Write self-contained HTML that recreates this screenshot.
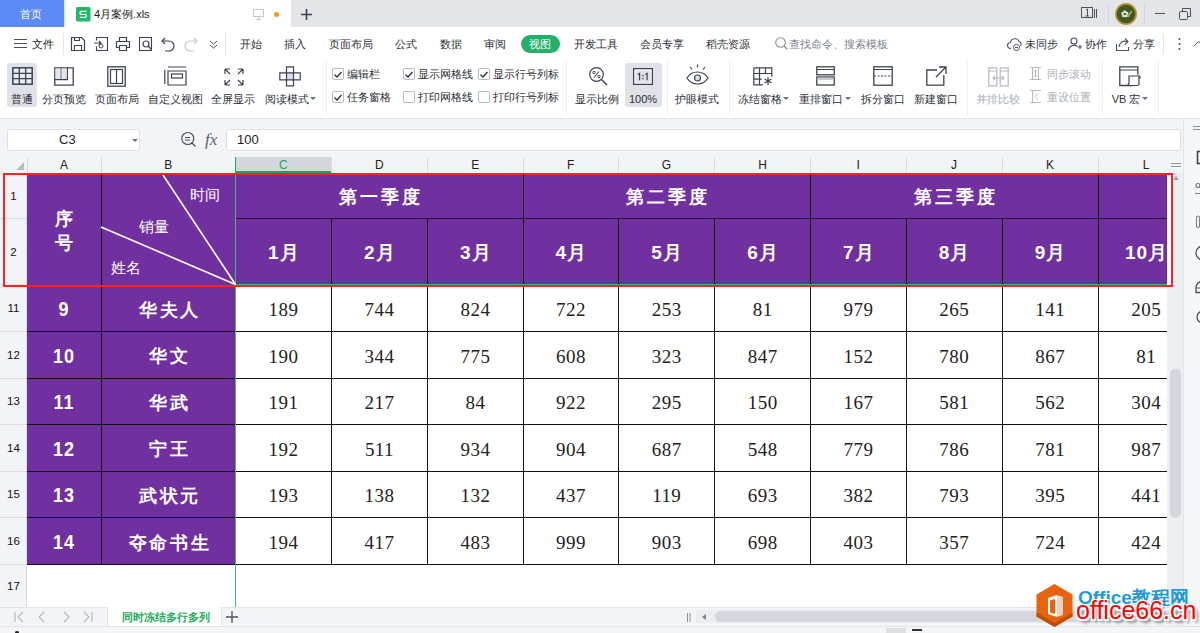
<!DOCTYPE html><html><head><meta charset="utf-8"><style>
*{margin:0;padding:0;box-sizing:border-box}
html,body{width:1200px;height:633px;overflow:hidden;background:#fff;font-family:"Liberation Sans",sans-serif;color:#333}
.ab{position:absolute}
.t{position:absolute;white-space:nowrap;font-size:11px;line-height:14px;color:#3a3d44}
.sep{position:absolute;width:1px;background:#e4e6ea}
.cell{position:absolute;display:flex;align-items:center;justify-content:center;white-space:nowrap}
.ph{color:#fff;font-weight:bold}
.num{font-family:"Liberation Serif",serif;font-size:19px;color:#222;padding-top:4px;letter-spacing:0.4px;padding-left:0.4px}
svg{position:absolute;overflow:visible}
</style></head><body>

<div class="ab" style="left:0;top:0;width:1200px;height:27px;background:#e3e5e9"></div>
<div class="ab" style="left:0;top:0;width:64px;height:27px;background:#5e8af5"></div>
<div class="t" style="left:20px;top:7px;font-size:11px;line-height:15px;color:#fff">首页</div>
<div class="ab" style="left:65px;top:0;width:226px;height:27px;background:#fff;border-left:1px solid #e8e9ec"></div>
<svg style="left:76px;top:7px" width="14.5" height="14.5"><rect x="0" y="0" width="14.5" height="14.5" rx="1.5" fill="#1dba6c"/><path d="M10.6 4.4H5.4A1.5 1.5 0 0 0 5.4 7.4H9A1.5 1.5 0 0 1 9 10.4H3.8" fill="none" stroke="#fff" stroke-width="1.1"/></svg>
<div class="t" style="left:94px;top:7px;font-size:11px;line-height:15px;color:#222">4月案例.xls</div>
<svg style="left:253px;top:9px" width="11" height="11"><rect x="0.5" y="0.5" width="10" height="7" fill="none" stroke="#c3c7cf" stroke-width="1"/><path d="M5.5 8v2M3 10.5h5" stroke="#c3c7cf"/></svg>
<div class="ab" style="left:274px;top:12px;width:5px;height:5px;border-radius:50%;background:#ec9a16"></div>
<svg style="left:301px;top:9px" width="11" height="11"><path d="M5.5 0v11M0 5.5h11" stroke="#3b4252" stroke-width="1.6"/></svg>
<svg style="left:1081px;top:6px" width="18" height="14"><rect x="0.5" y="1.5" width="11" height="10" fill="none" stroke="#4a5060"/><path d="M5 4l1.5-1v7M4.5 10h3.5" fill="none" stroke="#4a5060"/><path d="M13.5 3v9M15.5 3v9" stroke="#4a5060"/></svg>
<div class="sep" style="left:1108px;top:4px;height:19px;background:#d2d5db"></div>
<div class="ab" style="left:1115px;top:3px;width:22px;height:22px;border-radius:50%;background:radial-gradient(circle,#3e5a1e 55%,#b8862c 62%,#d9b25a 80%,#8a6424 100%)"></div>
<div class="t" style="left:1121px;top:7px;font-size:9px;color:#e8e8e0;font-weight:bold">✿⁄</div>
<div class="sep" style="left:1144px;top:4px;height:19px;background:#d2d5db"></div>
<div class="ab" style="left:1155px;top:13px;width:10px;height:1px;background:#4a5060"></div>
<svg style="left:1179px;top:8px" width="12" height="12"><rect x="0.5" y="3.5" width="8" height="8" fill="none" stroke="#4a5060" rx="1"/><path d="M3.5 3.5V0.5h8v8h-3" fill="none" stroke="#4a5060"/></svg>
<svg style="left:14px;top:39px" width="13" height="10"><path d="M0 0.5h13M0 4.5h13M0 8.5h13" stroke="#4a5060" stroke-width="1.2"/></svg>
<div class="t" style="left:32px;top:37px;color:#222">文件</div>
<div class="sep" style="left:63px;top:33px;height:22px"></div>
<svg style="left:71px;top:37px" width="14" height="14"><path d="M0.5 0.5h10l3 3v10h-13z" fill="none" stroke="#3c4250" stroke-width="1.2"/><path d="M3.5 13.5v-5h7v5M3.5 0.5v3h5v-3" fill="none" stroke="#3c4250" stroke-width="1.1"/></svg>
<svg style="left:94px;top:37px" width="14" height="14"><path d="M2.5 3.5v-3h11v13h-11v-4" fill="none" stroke="#3c4250" stroke-width="1.1"/><path d="M0 6h7M5 4l2 2-2 2" fill="none" stroke="#3c4250" stroke-width="1.1"/><circle cx="7" cy="9" r="2" fill="none" stroke="#3c4250"/></svg>
<svg style="left:116px;top:37px" width="14" height="14"><path d="M3.5 4.5v-4h7v4M0.5 4.5h13v6h-3M3.5 10.5h-3v-6M3.5 8.5h7v5h-7z" fill="none" stroke="#3c4250" stroke-width="1.2"/></svg>
<svg style="left:139px;top:37px" width="14" height="14"><rect x="0.5" y="0.5" width="12" height="13" fill="none" stroke="#3c4250" stroke-width="1.1"/><circle cx="7" cy="7" r="3" fill="none" stroke="#3c4250" stroke-width="1.2"/><path d="M9 9l3.5 3.5" stroke="#3c4250" stroke-width="1.3"/></svg>
<svg style="left:161px;top:37px" width="14" height="14"><path d="M4 1L1 4l3 3" fill="none" stroke="#3c4250" stroke-width="1.2"/><path d="M1 4h7a5 5 0 0 1 0 10H4" fill="none" stroke="#3c4250" stroke-width="1.2"/></svg>
<svg style="left:184px;top:37px" width="14" height="14"><path d="M10 1l3 3-3 3" fill="none" stroke="#c6cad1" stroke-width="1.2"/><path d="M13 4H6a5 5 0 0 0 0 10h4" fill="none" stroke="#c6cad1" stroke-width="1.2"/></svg>
<svg style="left:209px;top:40px" width="9" height="9"><path d="M1 1l3.5 3 3.5-3M1 5l3.5 3 3.5-3" fill="none" stroke="#4a5060" stroke-width="1"/></svg>
<div class="sep" style="left:225px;top:33px;height:22px"></div>
<div class="t" style="left:240px;top:37px;color:#2b2f36">开始</div>
<div class="t" style="left:284px;top:37px;color:#2b2f36">插入</div>
<div class="t" style="left:329px;top:37px;color:#2b2f36">页面布局</div>
<div class="t" style="left:395px;top:37px;color:#2b2f36">公式</div>
<div class="t" style="left:440px;top:37px;color:#2b2f36">数据</div>
<div class="t" style="left:484px;top:37px;color:#2b2f36">审阅</div>
<div class="t" style="left:574px;top:37px;color:#2b2f36">开发工具</div>
<div class="t" style="left:640px;top:37px;color:#2b2f36">会员专享</div>
<div class="t" style="left:706px;top:37px;color:#2b2f36">稻壳资源</div>
<div class="ab" style="left:521px;top:35px;width:39px;height:18px;border-radius:9px;background:#23b06b"></div>
<div class="t" style="left:529px;top:37px;color:#fff">视图</div>
<svg style="left:775px;top:37px" width="13" height="13"><circle cx="5.5" cy="5.5" r="4.8" fill="none" stroke="#8a909c" stroke-width="1.1"/><path d="M9 9l3.5 3.5" stroke="#8a909c" stroke-width="1.2"/></svg>
<div class="t" style="left:789px;top:37px;color:#7c828e">查找命令、搜索模板</div>
<svg style="left:1007px;top:37px" width="15" height="14"><path d="M4 11.5H3.5a3 3 0 0 1 0-6 4.5 4.5 0 0 1 8.6-1 3 3 0 0 1 1.5 4.5" fill="none" stroke="#4a5060" stroke-width="1.1"/><circle cx="9.5" cy="10.5" r="3" fill="#fff" stroke="#4a5060"/><path d="M8 10.5h3" stroke="#4a5060"/></svg>
<div class="t" style="left:1025px;top:37px;color:#2b2f36">未同步</div>
<svg style="left:1068px;top:37px" width="14" height="14"><circle cx="6" cy="4" r="3" fill="none" stroke="#4a5060" stroke-width="1.1"/><path d="M0.5 13.5a5.5 5.5 0 0 1 9-4M10 10h4M12 8v4" fill="none" stroke="#4a5060" stroke-width="1.1"/></svg>
<div class="t" style="left:1085px;top:37px;color:#2b2f36">协作</div>
<svg style="left:1116px;top:37px" width="14" height="14"><path d="M0.5 7v6.5h12V10" fill="none" stroke="#4a5060" stroke-width="1.1"/><path d="M3 10a6 6 0 0 1 8-5.5M9 1.5l3 3-3 3" fill="none" stroke="#4a5060" stroke-width="1.1"/></svg>
<div class="t" style="left:1133px;top:37px;color:#2b2f36">分享</div>
<div class="sep" style="left:1163px;top:34px;height:20px"></div>
<svg style="left:1178px;top:37px" width="3" height="14"><circle cx="1.5" cy="2" r="1" fill="#4a5060"/><circle cx="1.5" cy="7" r="1" fill="#4a5060"/><circle cx="1.5" cy="12" r="1" fill="#4a5060"/></svg>
<svg style="left:1194px;top:40px" width="8" height="6"><path d="M0.5 5.5l4-4 4 4" fill="none" stroke="#4a5060"/></svg>
<div class="ab" style="left:7px;top:63px;width:30px;height:44px;background:#dfe2e7;border-radius:3px"></div>
<div class="ab" style="left:625px;top:63px;width:37px;height:44px;background:#dfe2e7;border-radius:3px"></div>
<div class="t" style="left:-38px;width:120px;text-align:center;top:92px;color:#2b2f36">普通</div>
<div class="t" style="left:4px;width:120px;text-align:center;top:92px;color:#2b2f36">分页预览</div>
<div class="t" style="left:57px;width:120px;text-align:center;top:92px;color:#2b2f36">页面布局</div>
<div class="t" style="left:115px;width:120px;text-align:center;top:92px;color:#2b2f36">自定义视图</div>
<div class="t" style="left:173px;width:120px;text-align:center;top:92px;color:#2b2f36">全屏显示</div>
<div class="t" style="left:537px;width:120px;text-align:center;top:92px;color:#2b2f36">显示比例</div>
<div class="t" style="left:583px;width:120px;text-align:center;top:92px;color:#2b2f36">100%</div>
<div class="t" style="left:637px;width:120px;text-align:center;top:92px;color:#2b2f36">护眼模式</div>
<div class="t" style="left:700px;width:120px;text-align:center;top:92px;color:#2b2f36">冻结窗格</div>
<div class="t" style="left:761px;width:120px;text-align:center;top:92px;color:#2b2f36">重排窗口</div>
<div class="t" style="left:823px;width:120px;text-align:center;top:92px;color:#2b2f36">拆分窗口</div>
<div class="t" style="left:876px;width:120px;text-align:center;top:92px;color:#2b2f36">新建窗口</div>
<div class="t" style="left:938px;width:120px;text-align:center;top:92px;color:#a9adb5">并排比较</div>
<div class="t" style="left:1066px;width:120px;text-align:center;top:92px;color:#2b2f36">VB 宏</div>
<div class="t" style="left:265px;top:92px;color:#2b2f36">阅读模式</div>
<svg style="left:310px;top:97px" width="6" height="4"><path d="M0 0h6L3 3z" fill="#6a707c"/></svg>
<svg style="left:783px;top:97px" width="6" height="4"><path d="M0 0h6L3 3z" fill="#6a707c"/></svg>
<svg style="left:845px;top:97px" width="6" height="4"><path d="M0 0h6L3 3z" fill="#6a707c"/></svg>
<svg style="left:1142px;top:97px" width="6" height="4"><path d="M0 0h6L3 3z" fill="#6a707c"/></svg>
<div class="sep" style="left:326px;top:62px;height:54px;background:#eceef1"></div>
<div class="sep" style="left:566px;top:62px;height:54px;background:#eceef1"></div>
<div class="sep" style="left:667px;top:62px;height:54px;background:#eceef1"></div>
<div class="sep" style="left:729px;top:62px;height:54px;background:#eceef1"></div>
<div class="sep" style="left:967px;top:62px;height:54px;background:#eceef1"></div>
<div class="sep" style="left:1102px;top:62px;height:54px;background:#eceef1"></div>
<div class="sep" style="left:1158px;top:62px;height:54px;background:#eceef1"></div>
<div class="ab" style="left:332px;top:68px;width:12px;height:12px;border:1px solid #b5b9c1;border-radius:2px;background:#fff"></div>
<svg style="left:334px;top:71px" width="8" height="7"><path d="M0.5 3.5l2.5 2.5 4.5-5" fill="none" stroke="#2b2f36" stroke-width="1.3"/></svg>
<div class="t" style="left:347px;top:67px;color:#2b2f36">编辑栏</div>
<div class="ab" style="left:332px;top:91px;width:12px;height:12px;border:1px solid #b5b9c1;border-radius:2px;background:#fff"></div>
<svg style="left:334px;top:94px" width="8" height="7"><path d="M0.5 3.5l2.5 2.5 4.5-5" fill="none" stroke="#2b2f36" stroke-width="1.3"/></svg>
<div class="t" style="left:347px;top:90px;color:#2b2f36">任务窗格</div>
<div class="ab" style="left:403px;top:68px;width:12px;height:12px;border:1px solid #b5b9c1;border-radius:2px;background:#fff"></div>
<svg style="left:405px;top:71px" width="8" height="7"><path d="M0.5 3.5l2.5 2.5 4.5-5" fill="none" stroke="#2b2f36" stroke-width="1.3"/></svg>
<div class="t" style="left:418px;top:67px;color:#2b2f36">显示网格线</div>
<div class="ab" style="left:403px;top:91px;width:12px;height:12px;border:1px solid #b5b9c1;border-radius:2px;background:#fff"></div>
<div class="t" style="left:418px;top:90px;color:#2b2f36">打印网格线</div>
<div class="ab" style="left:478px;top:68px;width:12px;height:12px;border:1px solid #b5b9c1;border-radius:2px;background:#fff"></div>
<svg style="left:480px;top:71px" width="8" height="7"><path d="M0.5 3.5l2.5 2.5 4.5-5" fill="none" stroke="#2b2f36" stroke-width="1.3"/></svg>
<div class="t" style="left:493px;top:67px;color:#2b2f36">显示行号列标</div>
<div class="ab" style="left:478px;top:91px;width:12px;height:12px;border:1px solid #b5b9c1;border-radius:2px;background:#fff"></div>
<div class="t" style="left:493px;top:90px;color:#2b2f36">打印行号列标</div>
<svg style="left:1030px;top:67px" width="12" height="13"><path d="M0 0.5h11M0 12.5h11M2.5 1v11M8.5 1v11M5.5 3v7M4 4.5l1.5-1.5 1.5 1.5M4 8.5l1.5 1.5 1.5-1.5" fill="none" stroke="#b5b9c0"/></svg>
<div class="t" style="left:1047px;top:67px;color:#a9adb5">同步滚动</div>
<svg style="left:1030px;top:90px" width="12" height="13"><path d="M0 0.5h11M0 12.5h11M2.5 1v11M8 3.5l-3 3 3 3" fill="none" stroke="#b5b9c0"/></svg>
<div class="t" style="left:1047px;top:90px;color:#a9adb5">重设位置</div>
<svg style="left:12px;top:67px" width="21" height="18"><rect x="0.8" y="0.8" width="19.4" height="16.4" fill="#e9ebee" stroke="#3c4250" stroke-width="1.5"/><path d="M0.8 6.3h19.4M0.8 11.7h19.4M7.3 0.8v16.4M13.7 0.8v16.4" stroke="#3c4250" stroke-width="1.3"/></svg>
<svg style="left:54px;top:67px" width="20" height="19"><path d="M0.8 0.8h18.4v17.4H0.8z" fill="none" stroke="#3c4250" stroke-width="1.3"/><path d="M0.8 12.5h12.5V0.8M7 0.8v11.7" fill="none" stroke="#3c4250" stroke-width="1.3"/><rect x="1.5" y="1.5" width="5" height="10.5" fill="#e3e5e8"/><rect x="7.6" y="1.5" width="5" height="10.5" fill="#e3e5e8"/></svg>
<svg style="left:107px;top:66px" width="19" height="21"><rect x="0.8" y="0.8" width="17.4" height="19.4" fill="none" stroke="#3c4250" stroke-width="1.3"/><rect x="3.5" y="3.5" width="12" height="14" fill="none" stroke="#3c4250" stroke-width="1.2"/><path d="M9.5 3.5v14" stroke="#3c4250" stroke-width="1.2"/></svg>
<svg style="left:164px;top:66px" width="23" height="20"><path d="M0.8 4v14M4 1h18M4 5h18v14H4z" fill="none" stroke="#3c4250" stroke-width="1.2"/><rect x="7.5" y="8" width="11" height="4" fill="none" stroke="#3c4250" stroke-width="1.2"/></svg>
<svg style="left:224px;top:68px" width="20" height="18"><path d="M1 1l5 5M1 1v5M1 1h5M19 1l-5 5M19 1v5M19 1h-5M1 17l5-5M1 17v-5M1 17h5M19 17l-5-5M19 17v-5M19 17h-5" fill="none" stroke="#3c4250" stroke-width="1.2"/></svg>
<svg style="left:279px;top:66px" width="22" height="21"><path d="M7.5 0.8h7v6h6.7v7h-6.7v6h-7v-6H0.8v-7h6.7z" fill="none" stroke="#3c4250" stroke-width="1.2"/><path d="M7.5 6.8h7v7h-7z" fill="#dcdfe3" stroke="#3c4250" stroke-width="1.2"/></svg>
<svg style="left:589px;top:67px" width="19" height="19"><circle cx="7.5" cy="7.5" r="6.8" fill="none" stroke="#3c4250" stroke-width="1.2"/><path d="M12.5 12.5l5.5 5.5" stroke="#3c4250" stroke-width="1.4"/><path d="M10 4.5l-5 6" stroke="#3c4250" stroke-width="1.1"/><circle cx="5" cy="5.5" r="1.2" fill="none" stroke="#3c4250"/><circle cx="10" cy="9.5" r="1.2" fill="none" stroke="#3c4250"/></svg>
<svg style="left:633px;top:67.5px" width="21" height="18"><rect x="0.65" y="0.65" width="18.7" height="15.7" fill="none" stroke="#3c4250" stroke-width="1.3"/><rect x="2" y="2" width="16" height="13" fill="none" stroke="#f4f5f7" stroke-width="1"/><path d="M4.8 6.5l1.8-1.2v7M12.3 6.5l1.8-1.2v7" fill="none" stroke="#3c4250" stroke-width="1.2"/><path d="M10 7.5v.3M10 10.5v.3" stroke="#3c4250" stroke-width="1.4" stroke-linecap="round"/></svg>
<svg style="left:686px;top:64px" width="23" height="22"><path d="M1 14c5-8 16-8 21 0c-5 8-16 8-21 0z" fill="none" stroke="#3c4250" stroke-width="1.2"/><circle cx="11.5" cy="14" r="3" fill="#e0e2e6" stroke="#3c4250" stroke-width="1.2"/><path d="M11.5 0.5v3M4 3l2 2.5M19 3l-2 2.5" stroke="#3c4250" stroke-width="1.2"/></svg>
<svg style="left:753px;top:67px" width="21" height="19"><path d="M0.8 0.8h18v9M0.8 0.8v17h9M0.8 6.5h18M0.8 12.2h8M6.5 0.8v17M12.5 0.8v6" fill="none" stroke="#3c4250" stroke-width="1.2"/><path d="M15 10v8M11.5 12l7 4M18.5 12l-7 4" stroke="#3c4250" stroke-width="1.2"/></svg>
<svg style="left:816px;top:66px" width="19" height="20"><rect x="0.8" y="0.8" width="17.4" height="8" fill="none" stroke="#3c4250" stroke-width="1.3"/><rect x="0.8" y="11" width="17.4" height="8" fill="none" stroke="#3c4250" stroke-width="1.3"/><rect x="1.5" y="11.6" width="16" height="2.5" fill="#c5c8ce"/><path d="M0.8 3.5h17.4" stroke="#3c4250"/></svg>
<svg style="left:873px;top:66px" width="20" height="20"><rect x="0.8" y="0.8" width="18.4" height="18.4" fill="none" stroke="#3c4250" stroke-width="1.3"/><path d="M0.8 3.5h18.4" stroke="#3c4250"/><path d="M1 10h18" stroke="#3c4250" stroke-dasharray="2 1.5"/></svg>
<svg style="left:926px;top:66px" width="21" height="20"><path d="M11 4H0.8v15.2h17V9" fill="none" stroke="#3c4250" stroke-width="1.3"/><path d="M10 11L20 1M13 1h7v7" fill="none" stroke="#3c4250" stroke-width="1.3"/></svg>
<svg style="left:988px;top:67px" width="21" height="20"><path d="M0.8 0.8h8v18h-8zM12.2 0.8h8v18h-8zM0.8 4h8M12.2 4h8" fill="none" stroke="#b5b9c0" stroke-width="1.2"/><path d="M5 11h11M7 9l-2 2 2 2M14 9l2 2-2 2" fill="none" stroke="#b5b9c0" stroke-width="1.1"/></svg>
<svg style="left:1119px;top:66px" width="22" height="21"><path d="M14 19.5H0.8V0.8h18v8" fill="none" stroke="#3c4250" stroke-width="1.3"/><path d="M0.8 4h18" stroke="#3c4250"/><path d="M8 19.5c2 0 2-2 2-3V10h10v8c0 1-1 1.5-2 1.5H8z" fill="#fff" stroke="#3c4250" stroke-width="1.2"/><path d="M20 10c1 0 1.5 1 1.5 2h-1.5" fill="none" stroke="#3c4250"/></svg>
<div class="ab" style="left:0;top:118px;width:1200px;height:1px;background:#e2e4e8"></div>
<div class="ab" style="left:0;top:119px;width:1183px;height:38px;background:#f3f4f7"></div>
<div class="ab" style="left:7px;top:129px;width:133px;height:22px;background:#fff;border:1px solid #dcdfe4;border-radius:3px"></div>
<div class="t" style="left:59px;top:133px;font-size:13px;color:#222">C3</div>
<svg style="left:132px;top:139px" width="6" height="4"><path d="M0 0h6L3 3z" fill="#6a707c"/></svg>
<svg style="left:181px;top:132px" width="16" height="16"><circle cx="6.8" cy="6.5" r="6" fill="none" stroke="#4a5060" stroke-width="1.2"/><path d="M4 5.5h5M4 8h5" stroke="#4a5060"/><path d="M10.5 10.5l4 4" stroke="#4a5060" stroke-width="1.3"/></svg>
<div class="t" style="left:205px;top:132px;font-family:'Liberation Serif',serif;font-style:italic;font-size:17px;line-height:16px;color:#5a6275">fx</div>
<div class="ab" style="left:226px;top:129px;width:955px;height:22px;background:#fff;border:1px solid #dcdfe4;border-radius:3px"></div>
<div class="t" style="left:237px;top:133px;font-size:13px;color:#222">100</div>
<div class="ab" style="left:0;top:157px;width:1167px;height:16px;background:#f3f4f7"></div>
<div class="ab" style="left:0;top:173px;width:27px;height:434px;background:#f3f4f7"></div>
<svg style="left:16px;top:162px" width="8" height="8"><path d="M8 0v8H0z" fill="#b9bdc4"/></svg>
<div class="t" style="left:44.0px;width:40px;text-align:center;top:158px;font-size:12px;color:#222">A</div>
<div class="ab" style="left:26.5px;top:158px;width:1px;height:15px;background:#d8dbe0"></div>
<div class="t" style="left:148.25px;width:40px;text-align:center;top:158px;font-size:12px;color:#222">B</div>
<div class="ab" style="left:100.5px;top:158px;width:1px;height:15px;background:#d8dbe0"></div>
<div class="ab" style="left:236px;top:157px;width:95px;height:16px;background:#d4d7dd;border-bottom:2px solid #21a366"></div>
<div class="t" style="left:263.25px;width:40px;text-align:center;top:158px;font-size:12px;color:#21a366">C</div>
<div class="ab" style="left:235.0px;top:158px;width:1px;height:15px;background:#d8dbe0"></div>
<div class="t" style="left:359.25px;width:40px;text-align:center;top:158px;font-size:12px;color:#222">D</div>
<div class="ab" style="left:330.5px;top:158px;width:1px;height:15px;background:#d8dbe0"></div>
<div class="t" style="left:455.25px;width:40px;text-align:center;top:158px;font-size:12px;color:#222">E</div>
<div class="ab" style="left:427.0px;top:158px;width:1px;height:15px;background:#d8dbe0"></div>
<div class="t" style="left:550.75px;width:40px;text-align:center;top:158px;font-size:12px;color:#222">F</div>
<div class="ab" style="left:522.5px;top:158px;width:1px;height:15px;background:#d8dbe0"></div>
<div class="t" style="left:646.5px;width:40px;text-align:center;top:158px;font-size:12px;color:#222">G</div>
<div class="ab" style="left:618.0px;top:158px;width:1px;height:15px;background:#d8dbe0"></div>
<div class="t" style="left:742.5px;width:40px;text-align:center;top:158px;font-size:12px;color:#222">H</div>
<div class="ab" style="left:714.0px;top:158px;width:1px;height:15px;background:#d8dbe0"></div>
<div class="t" style="left:838.25px;width:40px;text-align:center;top:158px;font-size:12px;color:#222">I</div>
<div class="ab" style="left:810.0px;top:158px;width:1px;height:15px;background:#d8dbe0"></div>
<div class="t" style="left:934.0px;width:40px;text-align:center;top:158px;font-size:12px;color:#222">J</div>
<div class="ab" style="left:905.5px;top:158px;width:1px;height:15px;background:#d8dbe0"></div>
<div class="t" style="left:1030.0px;width:40px;text-align:center;top:158px;font-size:12px;color:#222">K</div>
<div class="ab" style="left:1001.5px;top:158px;width:1px;height:15px;background:#d8dbe0"></div>
<div class="t" style="left:1126.0px;width:40px;text-align:center;top:158px;font-size:12px;color:#222">L</div>
<div class="ab" style="left:1097.5px;top:158px;width:1px;height:15px;background:#d8dbe0"></div>
<div class="ab" style="left:235px;top:157px;width:1px;height:16px;background:#21a366"></div>
<div class="t" style="left:0;width:27px;text-align:center;top:188.75px;font-size:11.5px;color:#111">1</div>
<div class="ab" style="left:0;top:218.0px;width:27px;height:1px;background:#dcdfe4"></div>
<div class="t" style="left:0;width:27px;text-align:center;top:244.5px;font-size:11.5px;color:#111">2</div>
<div class="ab" style="left:0;top:284.0px;width:27px;height:1px;background:#dcdfe4"></div>
<div class="t" style="left:0;width:27px;text-align:center;top:300.75px;font-size:11.5px;color:#111">11</div>
<div class="ab" style="left:0;top:330.5px;width:27px;height:1px;background:#dcdfe4"></div>
<div class="t" style="left:0;width:27px;text-align:center;top:347.5px;font-size:11.5px;color:#111">12</div>
<div class="ab" style="left:0;top:377.5px;width:27px;height:1px;background:#dcdfe4"></div>
<div class="t" style="left:0;width:27px;text-align:center;top:394.0px;font-size:11.5px;color:#111">13</div>
<div class="ab" style="left:0;top:423.5px;width:27px;height:1px;background:#dcdfe4"></div>
<div class="t" style="left:0;width:27px;text-align:center;top:440.5px;font-size:11.5px;color:#111">14</div>
<div class="ab" style="left:0;top:470.5px;width:27px;height:1px;background:#dcdfe4"></div>
<div class="t" style="left:0;width:27px;text-align:center;top:487.25px;font-size:11.5px;color:#111">15</div>
<div class="ab" style="left:0;top:517.0px;width:27px;height:1px;background:#dcdfe4"></div>
<div class="t" style="left:0;width:27px;text-align:center;top:533.75px;font-size:11.5px;color:#111">16</div>
<div class="ab" style="left:0;top:563.5px;width:27px;height:1px;background:#dcdfe4"></div>
<div class="t" style="left:0;width:27px;text-align:center;top:578.5px;font-size:11.5px;color:#111">17</div>
<div class="ab" style="left:0;top:606.5px;width:27px;height:1px;background:#dcdfe4"></div>
<div class="ab" style="left:26px;top:173px;width:1px;height:434px;background:#d8dbe0"></div>
<div class="ab" style="left:27px;top:173px;width:1140px;height:111.5px;background:#7030a0"></div>
<div class="ab" style="left:27px;top:284.5px;width:208.5px;height:279.5px;background:#7030a0"></div>
<div class="ab" style="left:27px;top:330.5px;width:1140px;height:1px;background:#111"></div>
<div class="ab" style="left:27px;top:377.5px;width:1140px;height:1px;background:#111"></div>
<div class="ab" style="left:27px;top:423.5px;width:1140px;height:1px;background:#111"></div>
<div class="ab" style="left:27px;top:470.5px;width:1140px;height:1px;background:#111"></div>
<div class="ab" style="left:27px;top:516.5px;width:1140px;height:1px;background:#111"></div>
<div class="ab" style="left:27px;top:563.5px;width:1140px;height:1px;background:#111"></div>
<div class="ab" style="left:236px;top:218px;width:931px;height:1px;background:#241033"></div>
<div class="ab" style="left:100.5px;top:173px;width:1px;height:391px;background:#111"></div>
<div class="ab" style="left:330.5px;top:218.5px;width:1px;height:345.5px;background:#111"></div>
<div class="ab" style="left:427.0px;top:218.5px;width:1px;height:345.5px;background:#111"></div>
<div class="ab" style="left:618.0px;top:218.5px;width:1px;height:345.5px;background:#111"></div>
<div class="ab" style="left:714.0px;top:218.5px;width:1px;height:345.5px;background:#111"></div>
<div class="ab" style="left:905.5px;top:218.5px;width:1px;height:345.5px;background:#111"></div>
<div class="ab" style="left:1001.5px;top:218.5px;width:1px;height:345.5px;background:#111"></div>
<div class="ab" style="left:522.5px;top:173px;width:1px;height:391px;background:#111"></div>
<div class="ab" style="left:810.0px;top:173px;width:1px;height:391px;background:#111"></div>
<div class="ab" style="left:1097.5px;top:173px;width:1px;height:391px;background:#111"></div>
<div class="ab" style="left:235px;top:173px;width:1px;height:434px;background:#35b97c"></div>
<div class="ab" style="left:236px;top:283.5px;width:931px;height:1px;background:#35b97c"></div>
<div class="cell ph" style="left:27px;top:206.5px;width:74px;height:24px;font-size:18px">序</div>
<div class="cell ph" style="left:27px;top:230.5px;width:74px;height:24px;font-size:18px">号</div>
<svg style="left:101px;top:173px" width="135" height="112"><path d="M62 2L134.5 111.5M0 54L134.5 111.5" stroke="#fff" stroke-width="1.6"/></svg>
<div class="t" style="left:190px;top:186px;font-size:15px;line-height:17px;color:#fff">时间</div>
<div class="t" style="left:139px;top:218px;font-size:15px;line-height:17px;color:#fff">销量</div>
<div class="t" style="left:111px;top:259px;font-size:15px;line-height:17px;color:#fff">姓名</div>
<div class="cell ph" style="left:236px;top:175px;width:287px;height:43px;font-size:18px;letter-spacing:3px;padding-left:3px">第一季度</div>
<div class="cell ph" style="left:523px;top:175px;width:287.5px;height:43px;font-size:18px;letter-spacing:3px;padding-left:3px">第二季度</div>
<div class="cell ph" style="left:810.5px;top:175px;width:287.5px;height:43px;font-size:18px;letter-spacing:3px;padding-left:3px">第三季度</div>
<div class="cell ph" style="left:235.5px;top:219px;width:95.5px;height:65px;font-size:19px;padding-top:2px;letter-spacing:1px;padding-left:1px">1月</div>
<div class="cell ph" style="left:331px;top:219px;width:96.5px;height:65px;font-size:19px;padding-top:2px;letter-spacing:1px;padding-left:1px">2月</div>
<div class="cell ph" style="left:427.5px;top:219px;width:95.5px;height:65px;font-size:19px;padding-top:2px;letter-spacing:1px;padding-left:1px">3月</div>
<div class="cell ph" style="left:523px;top:219px;width:95.5px;height:65px;font-size:19px;padding-top:2px;letter-spacing:1px;padding-left:1px">4月</div>
<div class="cell ph" style="left:618.5px;top:219px;width:96.0px;height:65px;font-size:19px;padding-top:2px;letter-spacing:1px;padding-left:1px">5月</div>
<div class="cell ph" style="left:714.5px;top:219px;width:96.0px;height:65px;font-size:19px;padding-top:2px;letter-spacing:1px;padding-left:1px">6月</div>
<div class="cell ph" style="left:810.5px;top:219px;width:95.5px;height:65px;font-size:19px;padding-top:2px;letter-spacing:1px;padding-left:1px">7月</div>
<div class="cell ph" style="left:906px;top:219px;width:96px;height:65px;font-size:19px;padding-top:2px;letter-spacing:1px;padding-left:1px">8月</div>
<div class="cell ph" style="left:1002px;top:219px;width:96px;height:65px;font-size:19px;padding-top:2px;letter-spacing:1px;padding-left:1px">9月</div>
<div class="cell ph" style="left:1098px;top:219px;width:96px;height:65px;font-size:19px;padding-top:2px;letter-spacing:1px;padding-left:1px">10月</div>
<div class="cell ph" style="left:27px;top:284.5px;width:74px;height:46.5px;font-size:18px;letter-spacing:1px;padding-top:3px"><span style="display:inline-block;transform:scaleY(1.13)">9</span></div>
<div class="cell ph" style="left:101px;top:284.5px;width:134.5px;height:46.5px;font-size:18px;letter-spacing:2.6px;padding-left:3.6px;padding-top:3.5px">华夫人</div>
<div class="cell num" style="left:235.5px;top:284.5px;width:95.5px;height:46.5px">189</div>
<div class="cell num" style="left:331px;top:284.5px;width:96.5px;height:46.5px">744</div>
<div class="cell num" style="left:427.5px;top:284.5px;width:95.5px;height:46.5px">824</div>
<div class="cell num" style="left:523px;top:284.5px;width:95.5px;height:46.5px">722</div>
<div class="cell num" style="left:618.5px;top:284.5px;width:96.0px;height:46.5px">253</div>
<div class="cell num" style="left:714.5px;top:284.5px;width:96.0px;height:46.5px">81</div>
<div class="cell num" style="left:810.5px;top:284.5px;width:95.5px;height:46.5px">979</div>
<div class="cell num" style="left:906px;top:284.5px;width:96px;height:46.5px">265</div>
<div class="cell num" style="left:1002px;top:284.5px;width:96px;height:46.5px">141</div>
<div class="cell num" style="left:1098px;top:284.5px;width:96px;height:46.5px">205</div>
<div class="cell ph" style="left:27px;top:331px;width:74px;height:47px;font-size:18px;letter-spacing:1px;padding-top:3px"><span style="display:inline-block;transform:scaleY(1.13)">10</span></div>
<div class="cell ph" style="left:101px;top:331px;width:134.5px;height:47px;font-size:18px;letter-spacing:2.6px;padding-left:3.6px;padding-top:3.5px">华文</div>
<div class="cell num" style="left:235.5px;top:331px;width:95.5px;height:47px">190</div>
<div class="cell num" style="left:331px;top:331px;width:96.5px;height:47px">344</div>
<div class="cell num" style="left:427.5px;top:331px;width:95.5px;height:47px">775</div>
<div class="cell num" style="left:523px;top:331px;width:95.5px;height:47px">608</div>
<div class="cell num" style="left:618.5px;top:331px;width:96.0px;height:47px">323</div>
<div class="cell num" style="left:714.5px;top:331px;width:96.0px;height:47px">847</div>
<div class="cell num" style="left:810.5px;top:331px;width:95.5px;height:47px">152</div>
<div class="cell num" style="left:906px;top:331px;width:96px;height:47px">780</div>
<div class="cell num" style="left:1002px;top:331px;width:96px;height:47px">867</div>
<div class="cell num" style="left:1098px;top:331px;width:96px;height:47px">81</div>
<div class="cell ph" style="left:27px;top:378px;width:74px;height:46px;font-size:18px;letter-spacing:1px;padding-top:3px"><span style="display:inline-block;transform:scaleY(1.13)">11</span></div>
<div class="cell ph" style="left:101px;top:378px;width:134.5px;height:46px;font-size:18px;letter-spacing:2.6px;padding-left:3.6px;padding-top:3.5px">华武</div>
<div class="cell num" style="left:235.5px;top:378px;width:95.5px;height:46px">191</div>
<div class="cell num" style="left:331px;top:378px;width:96.5px;height:46px">217</div>
<div class="cell num" style="left:427.5px;top:378px;width:95.5px;height:46px">84</div>
<div class="cell num" style="left:523px;top:378px;width:95.5px;height:46px">922</div>
<div class="cell num" style="left:618.5px;top:378px;width:96.0px;height:46px">295</div>
<div class="cell num" style="left:714.5px;top:378px;width:96.0px;height:46px">150</div>
<div class="cell num" style="left:810.5px;top:378px;width:95.5px;height:46px">167</div>
<div class="cell num" style="left:906px;top:378px;width:96px;height:46px">581</div>
<div class="cell num" style="left:1002px;top:378px;width:96px;height:46px">562</div>
<div class="cell num" style="left:1098px;top:378px;width:96px;height:46px">304</div>
<div class="cell ph" style="left:27px;top:424px;width:74px;height:47px;font-size:18px;letter-spacing:1px;padding-top:3px"><span style="display:inline-block;transform:scaleY(1.13)">12</span></div>
<div class="cell ph" style="left:101px;top:424px;width:134.5px;height:47px;font-size:18px;letter-spacing:2.6px;padding-left:3.6px;padding-top:3.5px">宁王</div>
<div class="cell num" style="left:235.5px;top:424px;width:95.5px;height:47px">192</div>
<div class="cell num" style="left:331px;top:424px;width:96.5px;height:47px">511</div>
<div class="cell num" style="left:427.5px;top:424px;width:95.5px;height:47px">934</div>
<div class="cell num" style="left:523px;top:424px;width:95.5px;height:47px">904</div>
<div class="cell num" style="left:618.5px;top:424px;width:96.0px;height:47px">687</div>
<div class="cell num" style="left:714.5px;top:424px;width:96.0px;height:47px">548</div>
<div class="cell num" style="left:810.5px;top:424px;width:95.5px;height:47px">779</div>
<div class="cell num" style="left:906px;top:424px;width:96px;height:47px">786</div>
<div class="cell num" style="left:1002px;top:424px;width:96px;height:47px">781</div>
<div class="cell num" style="left:1098px;top:424px;width:96px;height:47px">987</div>
<div class="cell ph" style="left:27px;top:471px;width:74px;height:46.5px;font-size:18px;letter-spacing:1px;padding-top:3px"><span style="display:inline-block;transform:scaleY(1.13)">13</span></div>
<div class="cell ph" style="left:101px;top:471px;width:134.5px;height:46.5px;font-size:18px;letter-spacing:2.6px;padding-left:3.6px;padding-top:3.5px">武状元</div>
<div class="cell num" style="left:235.5px;top:471px;width:95.5px;height:46.5px">193</div>
<div class="cell num" style="left:331px;top:471px;width:96.5px;height:46.5px">138</div>
<div class="cell num" style="left:427.5px;top:471px;width:95.5px;height:46.5px">132</div>
<div class="cell num" style="left:523px;top:471px;width:95.5px;height:46.5px">437</div>
<div class="cell num" style="left:618.5px;top:471px;width:96.0px;height:46.5px">119</div>
<div class="cell num" style="left:714.5px;top:471px;width:96.0px;height:46.5px">693</div>
<div class="cell num" style="left:810.5px;top:471px;width:95.5px;height:46.5px">382</div>
<div class="cell num" style="left:906px;top:471px;width:96px;height:46.5px">793</div>
<div class="cell num" style="left:1002px;top:471px;width:96px;height:46.5px">395</div>
<div class="cell num" style="left:1098px;top:471px;width:96px;height:46.5px">441</div>
<div class="cell ph" style="left:27px;top:517.5px;width:74px;height:46.5px;font-size:18px;letter-spacing:1px;padding-top:3px"><span style="display:inline-block;transform:scaleY(1.13)">14</span></div>
<div class="cell ph" style="left:101px;top:517.5px;width:134.5px;height:46.5px;font-size:18px;letter-spacing:2.6px;padding-left:3.6px;padding-top:3.5px">夺命书生</div>
<div class="cell num" style="left:235.5px;top:517.5px;width:95.5px;height:46.5px">194</div>
<div class="cell num" style="left:331px;top:517.5px;width:96.5px;height:46.5px">417</div>
<div class="cell num" style="left:427.5px;top:517.5px;width:95.5px;height:46.5px">483</div>
<div class="cell num" style="left:523px;top:517.5px;width:95.5px;height:46.5px">999</div>
<div class="cell num" style="left:618.5px;top:517.5px;width:96.0px;height:46.5px">903</div>
<div class="cell num" style="left:714.5px;top:517.5px;width:96.0px;height:46.5px">698</div>
<div class="cell num" style="left:810.5px;top:517.5px;width:95.5px;height:46.5px">403</div>
<div class="cell num" style="left:906px;top:517.5px;width:96px;height:46.5px">357</div>
<div class="cell num" style="left:1002px;top:517.5px;width:96px;height:46.5px">724</div>
<div class="cell num" style="left:1098px;top:517.5px;width:96px;height:46.5px">424</div>
<div class="ab" style="left:1167px;top:157px;width:16px;height:450px;background:#eceef2"></div>
<div class="ab" style="left:1167px;top:157px;width:16px;height:16px;background:#f3f4f7"></div>
<svg style="left:1171px;top:163px" width="10" height="4"><path d="M0 0.5h10M0 3.5h10" stroke="#8a909c"/></svg>
<svg style="left:1173px;top:176px" width="6" height="4"><path d="M0 4L3 0l3 4z" fill="#9da3ad"/></svg>
<div class="ab" style="left:1170px;top:369px;width:11px;height:149px;background:#d4d7dd;border-radius:5px"></div>
<div class="ab" style="left:1167px;top:175px;width:4px;height:110px;background:#fff"></div>
<div class="ab" style="left:2.8px;top:173px;width:1170.5px;height:114px;border:2.7px solid #fb2222"></div>
<div class="ab" style="left:1183px;top:119px;width:17px;height:514px;background:#f6f7f9;border-left:1px solid #e4e6ea"></div>
<svg style="left:1195px;top:150px" width="10" height="180"><rect x="2.5" y="1.5" width="10" height="12" fill="none" stroke="#3f4550" stroke-width="1.6"/><circle cx="3" cy="35.5" r="2" fill="none" stroke="#6a707c" stroke-width="1.2"/><path d="M0 43.5h10" stroke="#8a909c" stroke-width="1.2"/><rect x="1.5" y="66" width="3" height="11.5" rx="1.5" fill="none" stroke="#7a808c" stroke-width="1.1"/><circle cx="8" cy="103" r="7" fill="none" stroke="#4a5060" stroke-width="1.3"/><path d="M8 99v4h3" fill="none" stroke="#4a5060"/><path d="M1 142.5v-5a6 6 0 0 1 12 0v5z" fill="none" stroke="#4a5060" stroke-width="1.3"/><path d="M1 138h4" stroke="#4a5060"/><circle cx="8" cy="167" r="6" fill="none" stroke="#4a5060" stroke-width="1.3"/></svg>
<svg style="left:1193px;top:126px" width="8" height="5"><path d="M0 0.5h8M0 3.5h8" stroke="#8a909c"/></svg>
<div class="ab" style="left:0;top:607px;width:1183px;height:20px;background:#f3f4f7;border-top:1px solid #e2e4e8"></div>
<div class="ab" style="left:0;top:626px;width:1200px;height:7px;background:#f4f5f7;border-top:1px solid #e2e4e8"></div>
<svg style="left:14px;top:611px" width="80" height="12"><path d="M1 1v10M9 1L4 6l5 5M30 1l-5 5 5 5M50 1l5 5-5 5M70 1l5 5-5 5M78 1v10" fill="none" stroke="#b0b4bb" stroke-width="1.1"/></svg>
<div class="ab" style="left:107px;top:607px;width:115px;height:19px;background:#fff;border-left:1px solid #e2e4e8;border-right:1px solid #e2e4e8"></div>
<div class="t" style="left:122px;top:610px;color:#1faa5e;font-weight:bold">同时冻结多行多列</div>
<svg style="left:226px;top:611px" width="12" height="12"><path d="M6 0v12M0 6h12" stroke="#4a5060" stroke-width="1.3"/></svg>
<svg style="left:687px;top:613px" width="4" height="9"><path d="M0.5 0v9M3 0v9" stroke="#8a909c"/></svg>
<div class="ab" style="left:696px;top:610px;width:487px;height:13px;background:#eceef2"></div>
<svg style="left:702px;top:614px" width="4" height="6"><path d="M4 0v6L0 3z" fill="#7a808c"/></svg>
<div class="ab" style="left:715px;top:611px;width:470px;height:11px;background:#d4d7dd;border-radius:6px"></div>
<div class="ab" style="left:886px;top:628px;width:20px;height:5px;background:#dcdfe4"></div>
<div class="ab" style="left:912px;top:629px;width:10px;height:4px;border-top:2px solid #333"></div>
<div class="ab" style="left:15px;top:631px;width:4px;height:3px;border-radius:2px;background:#222"></div>
<svg style="left:1036px;top:584px" width="37" height="43"><path d="M18.5 0L36.5 10.5v22L18.5 43L0.5 32.5v-22z" fill="#e8630f"/><path d="M18.5 43L36.5 32.5v-4L18.5 39L0.5 28.5v4z" fill="#c04e08"/><path d="M12 14l9-3v22l-9-3z" fill="#fff"/><path d="M21 11l6 2v18l-6 2z" fill="#f5d0b8"/><path d="M14 16.5l5-1.5v15l-5-1.5z" fill="#e8630f"/></svg>
<div class="t" style="left:1078px;top:588px;font-size:19px;line-height:20px;font-weight:bold;color:#1e9ad6;letter-spacing:0px">Office教程网</div>
<div class="t" style="left:1076px;top:598px;font-size:25px;line-height:24px;color:#f00;letter-spacing:0px;-webkit-text-stroke:0;text-shadow:-1.5px -1.5px 0 #fff,1.5px -1.5px 0 #fff,-1.5px 1.5px 0 #fff,1.5px 1.5px 0 #fff,3px 4px 3px rgba(0,0,0,.45)">office66.cn</div>
</body></html>
